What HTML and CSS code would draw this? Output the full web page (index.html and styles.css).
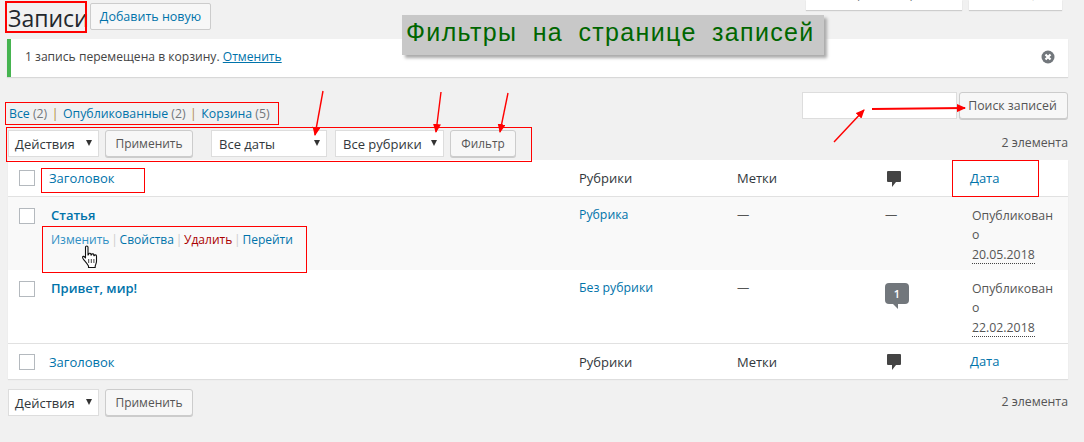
FILE: index.html
```html
<!DOCTYPE html>
<html lang="ru">
<head>
<meta charset="utf-8">
<title>Записи</title>
<link rel="stylesheet" href="styles.css">
</head>
<body>
<div class="page">
  <div class="meta-links">
    <span class="meta-tab tab-screen"><span>Настройки экрана</span></span>
    <span class="meta-tab tab-help"><span>Помощь</span></span>
  </div>
  <div class="heading">
    <h1>Записи</h1>
    <a class="add-new">Добавить новую</a>
  </div>
  <div class="notice">
    <p>1 запись перемещена в корзину. <a>Отменить</a></p>
    <svg class="dismiss" viewBox="0 0 14 14" width="14" height="14"><circle cx="7" cy="7" r="6.5" fill="#72777c"/><path d="M4.500 4.500l5 5M9.500 4.500l-5 5" stroke="#fff" stroke-width="2.2"/></svg>
  </div>
  <div class="search-row">
    <ul class="subsub">
      <li><a>Все <span class="count">(2)</span></a></li>
      <li class="sep">|</li>
      <li><a>Опубликованные <span class="count">(2)</span></a></li>
      <li class="sep">|</li>
      <li><a>Корзина <span class="count">(5)</span></a></li>
    </ul>
    <div class="search">
      <div class="input"></div>
      <button class="btn btn-search">Поиск записей</button>
    </div>
  </div>
  <div class="tablenav top">
    <div class="select sel-actions">Действия</div>
    <button class="btn btn-apply">Применить</button>
    <div class="select sel-dates">Все даты</div>
    <div class="select sel-cats">Все рубрики</div>
    <button class="btn btn-filter">Фильтр</button>
    <span class="num">2 элемента</span>
  </div>
  <div class="table">
    <div class="row head">
      <div class="c-check"><i class="cb"></i></div>
      <div class="c-title"><a>Заголовок</a></div>
      <div class="c-cat">Рубрики</div>
      <div class="c-tag">Метки</div>
      <div class="c-com"><svg class="bubble" viewBox="0 0 14 16" width="14" height="16"><path d="M1 0h12a1 1 0 0 1 1 1v9a1 1 0 0 1-1 1H9l-4 5v-5H1a1 1 0 0 1-1-1V1a1 1 0 0 1 1-1z" fill="#444"/></svg></div>
      <div class="c-date"><a>Дата</a></div>
    </div>
    <div class="row post alt">
      <div class="c-check"><i class="cb"></i></div>
      <div class="c-title">
        <a class="post-title">Статья</a>
        <div class="actions"><a class="light">Изменить</a><b>|</b><a>Свойства</a><b>|</b><a class="trash">Удалить</a><b>|</b><a>Перейти</a></div>
      </div>
      <div class="c-cat"><a>Рубрика</a></div>
      <div class="c-tag">—</div>
      <div class="c-com">—</div>
      <div class="c-date">Опубликовано<br><abbr>20.05.2018</abbr></div>
    </div>
    <div class="row post">
      <div class="c-check"><i class="cb"></i></div>
      <div class="c-title"><a class="post-title">Привет, мир!</a></div>
      <div class="c-cat"><a>Без рубрики</a></div>
      <div class="c-tag">—</div>
      <div class="c-com"><span class="count-bubble">1</span></div>
      <div class="c-date">Опубликовано<br><abbr>22.02.2018</abbr></div>
    </div>
    <div class="row foot">
      <div class="c-check"><i class="cb"></i></div>
      <div class="c-title"><a>Заголовок</a></div>
      <div class="c-cat">Рубрики</div>
      <div class="c-tag">Метки</div>
      <div class="c-com"><svg class="bubble" viewBox="0 0 14 16" width="14" height="16"><path d="M1 0h12a1 1 0 0 1 1 1v9a1 1 0 0 1-1 1H9l-4 5v-5H1a1 1 0 0 1-1-1V1a1 1 0 0 1 1-1z" fill="#444"/></svg></div>
      <div class="c-date"><a>Дата</a></div>
    </div>
  </div>
  <div class="tablenav bottom">
    <div class="select sel-actions">Действия</div>
    <button class="btn btn-apply">Применить</button>
    <span class="num">2 элемента</span>
  </div>
</div>

<div class="banner">Фильтры на странице записей</div>
<span class="mark m-h1"></span>
<span class="mark m-views"></span>
<span class="mark m-nav"></span>
<span class="mark m-title"></span>
<span class="mark m-actions"></span>
<span class="mark m-date"></span>

<svg class="arrows" width="1084" height="442" viewBox="0 0 1084 442">
  <defs>
    <marker id="tip" markerWidth="9" markerHeight="8" refX="8" refY="4" orient="auto" markerUnits="userSpaceOnUse">
      <path d="M0 0L9 4L0 8z" fill="#f00"/>
    </marker>
  </defs>
  <g stroke="#f00" stroke-width="1.4" fill="none">
    <path d="M323 91L315 135" marker-end="url(#tip)"/>
    <path d="M441 92L436 132" marker-end="url(#tip)"/>
    <path d="M508 93L500 132" marker-end="url(#tip)"/>
    <path d="M872 109L965 108" stroke-width="2" marker-end="url(#tip)"/>
    <path d="M834 142L864 110" marker-end="url(#tip)"/>
  </g>
</svg>
<svg class="hand" viewBox="0 0 18 24" width="18" height="24">
  <path d="M4.500 2.200c0-1.600 2.500-1.600 2.500 0V10l.6-.2V9c0-1 2.200-1 2.300 0v1l.6 0v-.4c0-1 2.200-1 2.300 0v1l.6 0c0-1 2.100-1 2.100.3v5.300c0 2-.8 3-1.300 4.800v1.500H7.500v-1.500C6.500 19 4.700 17 2.700 14.600 1.200 12.800 1.200 11 2.700 11.400c.8.200 1.300.9 1.800 1.600z" fill="#fff" stroke="#111" stroke-width="1.1" stroke-linejoin="round"/>
  <path d="M7.700 14v4M10.300 14v4M12.900 14v4" stroke="#111" stroke-width=".8"/>
</svg>
</body>
</html>
```
FILE: styles.css
```css
* { box-sizing: border-box; }
html, body { margin: 0; padding: 0; }
body {
  background: #f1f1f1;
  color: #444;
  font-family: "Open Sans", "Liberation Sans", sans-serif;
  font-size: 12.3px;
  line-height: 1.4;
  height: 442px;
  overflow: hidden;
}
a { color: #0073aa; text-decoration: none; }
.page { padding: 0 16px 0 8px; width: 1084px; }

.meta-links { display: flex; justify-content: flex-end; height: 10px; gap: 7px; padding-right: 6px; }
.meta-tab {
  display: flex; align-items: flex-end; justify-content: center;
  height: 10px; overflow: hidden;
  background: #fff; box-shadow: 0 1px 1px rgba(0,0,0,.15);
  color: #72777c; line-height: 18px;
}
.meta-tab span { margin-bottom: 7px; }
.tab-screen { width: 156px; }
.tab-help { width: 93px; }

.heading { display: flex; align-items: flex-start; margin-top: -7px; height: 36px; }
h1 {
  margin: 0; font-size: 23px; font-weight: 400; line-height: 29px; color: #23282d;
  padding-top: 1px; width: 82px;
}
.add-new {
  display: block; width: 121px; height: 27px; line-height: 25px; text-align: center;
  background: #f7f7f7; border: 1px solid #ccc; border-radius: 2px; font-size: 12.5px;
}

.notice {
  display: flex; align-items: center; justify-content: space-between;
  margin-left: -1px; height: 38px; background: #fff; border-left: 4px solid #46b450;
  box-shadow: 0 1px 1px rgba(0,0,0,.1); padding: 0 13px 2px 5px;
}
.notice p { margin: 0; padding-left: 9px; font-size: 12.1px; }
.notice p a { text-decoration: underline; }
.notice .dismiss { margin-top: -1px; }

.search-row { display: flex; justify-content: space-between; align-items: flex-start; height: 37px; margin-top: 15px; }
.subsub { list-style: none; margin: 0; padding: 13px 0 0 1px; display: flex; gap: 4.5px; color: #666; }
.subsub .sep { color: #b08a3a; }
.count { color: #72777c; }
.search { display: flex; gap: 2px; }
.input { width: 155px; height: 27px; background: #fff; border: 1px solid #ddd; }

.btn {
  font: inherit; color: #555; background: #f7f7f7; border: 1px solid #ccc; border-radius: 3px;
  box-shadow: 0 1px 0 #ccc; height: 27px; padding: 0; line-height: 25px; display: block;
}
.btn-search { width: 109px; padding-right: 2px; }
.btn-apply { width: 88px; font-size: 12px; }
.btn-filter { width: 66px; margin-left: 6px; font-size: 11.8px; }

.tablenav { display: flex; align-items: flex-start; height: 31px; }
.tablenav.top { padding-top: 1px; }
.select {
  position: relative; height: 27px; line-height: 27px; padding-left: 6px;
  background: #fff; border: 1px solid #ddd; color: #32373c; font-size: 13px;
}
.select::after {
  content: ""; position: absolute; right: 6px; top: 9px;
  border-left: 3px solid transparent; border-right: 3px solid transparent; border-top: 6px solid #333;
}
.sel-actions { width: 91px; margin-right: 6px; }
.sel-dates { width: 116px; margin-left: 18px; margin-right: 8px; padding-left: 7px; }
.sel-cats { width: 109px; padding-left: 7px; }
.num { margin-left: auto; color: #555; padding-top: 4px; }

.table { background: #fff; box-shadow: 0 1px 1px rgba(0,0,0,.08); }
.row { display: grid; grid-template-columns: 33px 528px 158px 148px 85px 108px; }
.row > div { padding-left: 10px; }
.row > .c-check { padding-left: 11px; }
.cb { display: block; width: 16px; height: 16px; border: 1px solid #b4b9be; background: #fff; }
.head, .foot { height: 36px; align-items: center; font-size: 13px; color: #32373c; padding-top: 1px; }
.head { border-bottom: 1px solid #e1e1e1; height: 37px; }
.foot { border-top: 1px solid #e1e1e1; }
.head .c-title, .foot .c-title { padding-left: 8px; }
.head .cb, .foot .cb { margin-top: -1px; }
.post { height: 73px; padding-top: 9px; color: #555; }
.alt { background: #f9f9f9; }
.post .cb { margin-top: 2px; }
.post-title { font-weight: 600; font-size: 13px; line-height: 19px; }
.c-com { color: #555; }
.actions { margin-top: 6px; line-height: 18px; display: flex; font-size: 12px; }
.actions b { font-weight: 400; color: #ccc; padding: 0 1.8px; }
.actions .light { color: #2e8fc4; }
.actions .trash { color: #a00; }
.c-date { word-break: break-all; line-height: 19.3px; padding-right: 8px; color: #555; }
.row > .c-date { margin-left: 12px; padding-left: 0; }
.c-date a { margin-left: -2px; }
abbr { border-bottom: 1px dotted #444; }
.bubble { display: block; margin: 0 0 0 2px; }
.count-bubble {
  position: relative; display: block; width: 24px; height: 21px; margin-top: 4px;
  background: #72777c; color: #fff; border-radius: 4px; font-size: 11px; font-weight: 600;
  text-align: center; line-height: 21px;
}
.count-bubble::after {
  content: ""; position: absolute; left: 8px; top: 21px;
  border-right: 5px solid #72777c; border-bottom: 5px solid transparent;
}
.tablenav.bottom { margin-top: 10px; }

.banner {
  position: absolute; left: 402px; top: 15px; width: 422px; height: 40px;
  background: #c8c8c8; box-shadow: 3px 3px 3px #aaa; color: #060;
  font-family: "Liberation Sans", sans-serif; font-size: 25px; line-height: 34px;
  word-spacing: 7px; letter-spacing: 1.35px; padding-left: 4px; white-space: nowrap;
}
.mark { position: absolute; border: 1px solid #f00; }
.m-h1 { border-width: 2px; left: 5px; top: 1px; width: 82px; height: 32px; }
.m-views { left: 5px; top: 102px; width: 274px; height: 23px; }
.m-nav { left: 6px; top: 127px; width: 526px; height: 35px; }
.m-title { left: 41px; top: 168px; width: 104px; height: 25px; }
.m-actions { left: 42px; top: 226px; width: 265px; height: 47px; }
.m-date { left: 952px; top: 160px; width: 87px; height: 37px; }
.arrows { position: absolute; left: 0; top: 0; pointer-events: none; }
.hand { position: absolute; left: 81px; top: 245px; }
```
